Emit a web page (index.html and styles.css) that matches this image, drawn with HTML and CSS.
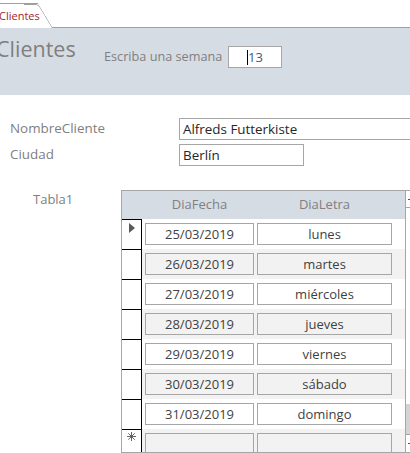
FILE: index.html
```html
<!DOCTYPE html>
<html lang="es">
<head>
<meta charset="utf-8">
<title>Clientes</title>
<link rel="stylesheet" href="styles.css">
</head>
<body>
<div class="tabstrip">
  <div class="tab"><span class="tab-text">Clientes</span><div class="tab-slant"></div></div>
  <div class="tab-rest"></div>
</div>
<div class="header">
  <div class="title">Clientes</div>
  <div class="week-label">Escriba una semana</div>
  <div class="week-input"><span class="caret"></span>13</div>
</div>
<div class="form">
  <div class="field">
    <div class="label">NombreCliente</div>
    <div class="input input-wide">Alfreds Futterkiste</div>
  </div>
  <div class="field">
    <div class="label">Ciudad</div>
    <div class="input input-short">Berlín</div>
  </div>
</div>
<div class="sub">
  <div class="sub-label">Tabla1</div>
  <div class="ds">
    <div class="ds-main">
      <div class="ds-head">
        <div class="ds-head-sel"></div>
        <div class="ds-head-cols">
          <div class="hc hc1">DiaFecha</div>
          <div class="hc hc2">DiaLetra</div>
        </div>
      </div>
      <div class="row">
        <div class="sel"><svg class="arrow" width="6" height="10" viewBox="0 0 6 10"><path d="M0 0 L6 5 L0 10 Z" fill="#5a5a5a"/></svg></div>
        <div class="rb"><div class="cell c1">25/03/2019</div><div class="cell c2">lunes</div></div>
      </div>
      <div class="row alt">
        <div class="sel"></div>
        <div class="rb"><div class="cell c1">26/03/2019</div><div class="cell c2">martes</div></div>
      </div>
      <div class="row">
        <div class="sel"></div>
        <div class="rb"><div class="cell c1">27/03/2019</div><div class="cell c2">miércoles</div></div>
      </div>
      <div class="row alt">
        <div class="sel"></div>
        <div class="rb"><div class="cell c1">28/03/2019</div><div class="cell c2">jueves</div></div>
      </div>
      <div class="row">
        <div class="sel"></div>
        <div class="rb"><div class="cell c1">29/03/2019</div><div class="cell c2">viernes</div></div>
      </div>
      <div class="row alt">
        <div class="sel"></div>
        <div class="rb"><div class="cell c1">30/03/2019</div><div class="cell c2">sábado</div></div>
      </div>
      <div class="row">
        <div class="sel"></div>
        <div class="rb"><div class="cell c1">31/03/2019</div><div class="cell c2">domingo</div></div>
      </div>
      <div class="row alt">
        <div class="sel sel-new"><svg width="9" height="9" viewBox="0 0 9 9"><g stroke="#555" stroke-width="0.9"><line x1="4.5" y1="0" x2="4.5" y2="9"/><line x1="0" y1="4.5" x2="9" y2="4.5"/><line x1="1.3" y1="1.3" x2="7.7" y2="7.7"/><line x1="7.7" y1="1.3" x2="1.3" y2="7.7"/></g></svg></div>
        <div class="rb"><div class="cell c1"></div><div class="cell c2"></div></div>
      </div>
    </div>
    <div class="sb">
      <div class="sb-btn"><span class="sb-glyph"></span></div>
      <div class="sb-track"></div>
      <div class="sb-thumb"></div>
      <div class="sb-btn sb-btn-bottom"><span class="sb-glyph"></span></div>
    </div>
  </div>
</div>
</body>
</html>
```
FILE: styles.css
```css
html, body {
  margin: 0;
  padding: 0;
}
body {
  width: 410px;
  height: 453px;
  overflow: hidden;
  background: #ffffff;
  font-family: "Open Sans", "Noto Sans", sans-serif;
  font-size: 13px;
  color: #262626;
}

/* tab strip */
.tabstrip {
  display: flex;
  height: 28px;
  align-items: flex-end;
}
.tab {
  display: flex;
  align-items: flex-end;
  height: 24px;
  width: 38px;
  flex: 0 0 38px;
  border-top: 1px solid #a0a0a0;
  background: #fff;
}
.tab-text {
  position: relative;
  z-index: 1;
  margin-left: -1px;
  height: 23px;
  line-height: 22px;
  font-size: 11px;
  color: #a3242c;
  white-space: nowrap;
}
.tab-slant {
  flex: 0 0 14px;
  width: 14px;
  height: 23px;
  margin-left: -2px;
  margin-right: -12px;
  background: #fff;
  border-top: 1px solid #a0a0a0;
  border-right: 1px solid #a0a0a0;
  border-top-right-radius: 3px;
  transform: skewX(31deg);
  transform-origin: bottom left;
}
.tab-rest {
  flex: 1;
  height: 27px;
  border-bottom: 1px solid #a0a0a0;
}

/* header band */
.header {
  display: flex;
  align-items: flex-start;
  height: 67px;
  background: #d6dce4;
  box-sizing: border-box;
  padding-top: 6px;
}
.title {
  flex: 0 0 108px;
  width: 108px;
  margin-left: -4px;
  font-size: 21.5px;
  line-height: 30px;
  color: #7f7f7f;
  white-space: nowrap;
}
.week-label {
  flex: 0 0 124px;
  margin-top: 12px;
  line-height: 21px;
  font-size: 12.7px;
  color: #808080;
  white-space: nowrap;
  width: 124px;
}
.week-input {
  flex: 0 0 54px;
  margin-top: 12px;
  width: 54px;
  height: 22px;
  box-sizing: border-box;
  border: 1px solid #a6a6a6;
  background: #fff;
  text-align: center;
  line-height: 20px;
  color: #3d5a7e;
  font-size: 13px;
}
.caret {
  display: inline-block;
  width: 1px;
  height: 15px;
  background: #000;
  vertical-align: -3px;
}

/* form fields */
.form {
  display: flex;
  flex-direction: column;
  gap: 4px;
  padding-top: 23px;
}
.field {
  display: flex;
  align-items: center;
  height: 22px;
}
.label {
  flex: 0 0 179px;
  width: 179px;
  box-sizing: border-box;
  padding-left: 10px;
  margin-top: -3px;
  color: #808080;
  font-size: 13.4px;
  white-space: nowrap;
}
.input {
  height: 22px;
  box-sizing: border-box;
  border: 1px solid #a6a6a6;
  background: #fff;
  padding-left: 3px;
  line-height: 20px;
  font-size: 13.4px;
  color: #262626;
  white-space: nowrap;
}
.input-wide {
  width: 231px;
  flex: 0 0 231px;
  border-right: none;
}
.input-short {
  width: 125px;
  flex: 0 0 125px;
}

/* subform */
.sub {
  display: flex;
  align-items: flex-start;
  margin-top: 24px;
}
.sub-label {
  flex: 0 0 121px;
  width: 121px;
  box-sizing: border-box;
  padding-left: 33px;
  line-height: 18px;
  color: #808080;
  font-size: 13px;
}
.ds {
  display: flex;
  height: 263px;
  width: 289px;
  flex: 0 0 289px;
  box-sizing: border-box;
  border: 1px solid #a6a6a6;
  border-right: none;
  overflow: hidden;
}
.ds-main {
  width: 283px;
  flex: 0 0 283px;
  display: flex;
  flex-direction: column;
}
.ds-head {
  display: flex;
  height: 28px;
  flex: 0 0 28px;
  background: #d6dce4;
}
.ds-head-sel {
  width: 20px;
  flex: 0 0 20px;
}
.ds-head-cols {
  display: flex;
  gap: 3px;
  padding-left: 3px;
}
.hc {
  line-height: 26px;
  text-align: center;
  color: #808080;
  font-size: 13px;
}
.hc1 { width: 109px; flex: 0 0 109px; }
.hc2 { width: 135px; flex: 0 0 135px; }

.row {
  display: flex;
  height: 30px;
  flex: 0 0 30px;
}
.sel {
  width: 20px;
  flex: 0 0 20px;
  box-sizing: border-box;
  border-top: 1px solid #000;
  border-right: 1px solid #000;
  background: #fff;
  display: flex;
  justify-content: center;
  align-items: flex-start;
}
.arrow {
  margin-top: 3px;
  margin-left: 1px;
}
.sel-new {
  padding-top: 2px;
}
.rb {
  flex: 1;
  display: flex;
  gap: 3px;
  padding: 4px 0 0 3px;
  background: #fff;
}
.row.alt .rb {
  background: #f2f2f2;
}
.cell {
  height: 22px;
  box-sizing: border-box;
  border: 1px solid #a6a6a6;
  background: #fff;
  text-align: center;
  line-height: 20px;
  color: #3f3f3f;
  font-size: 13px;
}
.row.alt .cell {
  background: #f2f2f2;
}
.c1 { width: 109px; flex: 0 0 109px; }
.c2 { width: 135px; flex: 0 0 135px; }

/* scrollbar */
.sb {
  flex: 1;
  display: flex;
  flex-direction: column;
  border-left: 1px solid #a6a6a6;
  background: #fff;
}
.sb-btn {
  height: 16px;
  flex: 0 0 16px;
  border-bottom: 1px solid #a6a6a6;
  display: flex;
  align-items: center;
}
.sb-btn-bottom {
  height: 17px;
  flex: 0 0 17px;
  border-bottom: none;
  border-top: 1px solid #a6a6a6;
}
.sb-glyph {
  width: 2px;
  height: 1px;
  margin-left: 2px;
  background: #555;
}
.sb-track {
  flex: 1;
}
.sb-thumb {
  height: 30px;
  flex: 0 0 30px;
  background: #d4d4d4;
}
```
